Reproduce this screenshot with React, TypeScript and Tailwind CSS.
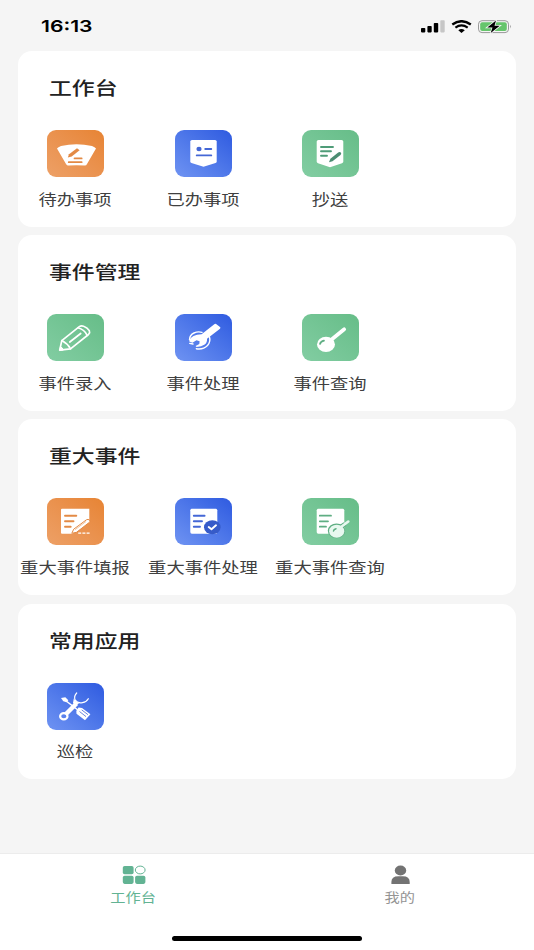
import type { ReactNode } from "react";
import clsx from "clsx";

type Tone = "orange" | "blue" | "green";

type AppItem = {
  label: string;
  tone: Tone;
  icon: ReactNode;
};

type Section = {
  title: string;
  items: AppItem[];
};

const tones: Record<Tone, string> = {
  orange: "bg-linear-to-tr from-[#eda066] to-[#e78433] text-[#e38a45]",
  blue: "bg-linear-to-tr from-[#6f93f2] to-[#2f5ae0] text-[#4467d6]",
  green: "bg-linear-to-tr from-[#82cda2] to-[#66bd88] text-[#5fae83]",
};

/* Tile icons, all drawn on the 57x47 tile. currentColor is the tile's tint. */

const TodoIcon = (
  <>
    <path d="M10 18.5Q11 17 14 16Q29.500 12.300 45 16Q48 17 49 18.500L40 34Q39.300 35.700 37.500 35.500Q29.500 34.800 21.500 35.500Q20 35.700 19 34Z" fill="#fff" />
    <path d="M20.800 27.600L22 24.300L30 18.300L32.600 20.200L24.700 26.600Z" fill="currentColor" />
    <path d="M27.500 28.400H34.700M21.700 32.200H34.700" stroke="currentColor" strokeWidth="1.700" strokeLinecap="round" />
  </>
);

const DoneIcon = (
  <>
    <path d="M17 10H40Q41.700 10 41.700 11.500V31.500Q41.700 32.600 40.500 33L28.500 36.800L16.500 33Q15.300 32.600 15.300 31.500V11.500Q15.300 10 17 10Z" fill="#fff" />
    <ellipse cx="24" cy="19" rx="2.600" ry="2.200" fill="currentColor" />
    <path d="M30.200 19H36.300M21.700 25.400H36.300" stroke="currentColor" strokeWidth="1.800" strokeLinecap="round" />
  </>
);

const CopyIcon = (
  <>
    <path d="M16.500 10H39.500Q41.300 10 41.300 11.500V31.800Q41.300 32.800 40 33.200L28 37.200L16 33.200Q14.700 32.800 14.700 31.800V11.500Q14.700 10 16.500 10Z" fill="#fff" />
    <path d="M19 17H31M19 21.300H29M19 25.700H25" stroke="#4f9c78" strokeWidth="1.900" strokeLinecap="round" />
    <path d="M27 32.200L28.400 28.800L36.200 22.400Q38 21.500 39 22.800Q39.600 23.800 38.500 24.900L30.500 31.200Z" fill="#4b8d72" />
  </>
);

const PencilIcon = (
  <g fill="none" stroke="#fff" strokeWidth="1.700" strokeLinejoin="round" strokeLinecap="round">
    <path d="M12.700 36.200L14.800 26.600L32.300 12.600Q34.300 11.200 36.600 12.200Q40.500 13.600 42.300 16.600Q43.300 18.700 41.500 20.500L23.500 34.800Z" />
    <path d="M14.800 26.600Q20.500 29.500 23.500 34.800M30.800 13.800Q37.500 15.500 40.200 21.400M22.800 28L33.700 19.500" />
    <path d="M12.700 36.200L13.500 32.800Q15.500 33.500 16.200 35.700Z" fill="#fff" strokeWidth="1" />
  </g>
);

const WrenchIcon = (
  <>
    {/* Broken ring round the jaw */}
    <path d="M14.500 25.800Q14.600 21 19 19Q23 17.200 27 18.400M34.400 22.800Q36 27.500 32.500 31.500Q28.300 35.800 21.300 34.700" fill="none" stroke="#fff" strokeWidth="1.400" strokeLinecap="round" />
    <path d="M39.300 10.200Q40.200 9.400 41.100 10.100L45 13.100Q45.900 13.900 45 14.700L32 24.800Q32.400 28.500 29.700 30.600Q26.500 33 21.500 33L20.600 32L24.300 29.900L24.600 27.300L21.500 26.200L17.400 28.700L14.300 27.600Q14.500 24 18.500 21.900Q21.500 20.400 26.600 20.300Z" fill="#fff" />
    <path d="M14.700 29.300L18 30" stroke="#fff" strokeWidth="1.300" strokeLinecap="round" />
  </>
);

const SearchIcon = (
  <>
    <path d="M29 26L42.200 15.300" stroke="#fff" strokeWidth="3.700" strokeLinecap="round" />
    <ellipse cx="24" cy="30.400" rx="9" ry="7.600" fill="#fff" />
    <path d="M18 30Q18.600 27.400 22 26.600" fill="none" stroke="currentColor" strokeWidth="1.700" strokeLinecap="round" />
  </>
);

const ReportIcon = (
  <>
    <path d="M15 10.700H42.300V22.500L25.500 35.700H15Q14 35.700 14 34.700V11.700Q14 10.700 15 10.700Z" fill="#fff" />
    <path d="M18 17.700H29.300M18 23.300H26.500M18 28.700H23.700" stroke="currentColor" strokeWidth="1.900" strokeLinecap="round" />
    <path d="M24.800 35.300L26.700 31.200L39.400 21.800Q41 20.900 42.500 22Q43.700 23.200 42.400 24.300L29.500 34.300Z" fill="#fff" stroke="currentColor" strokeWidth="1" />
    <path d="M28 31.700L39 23.500" stroke="currentColor" strokeWidth=".5" />
    <path d="M31.200 35.200H43" stroke="#fff" strokeWidth="1.300" strokeDasharray="3 1.200" />
  </>
);

const ProcessIcon = (
  <>
    <rect x="15.300" y="10.700" width="27" height="25" rx="1.600" fill="#fff" />
    <path d="M18.800 17.700H29.600M18.800 23.300H27M18.800 28.700H25" stroke="currentColor" strokeWidth="1.900" strokeLinecap="round" />
    <ellipse cx="37.300" cy="29.200" rx="8.300" ry="7" fill="#365bc9" />
    <path d="M33.700 29L36.500 31.300L41 27.300" fill="none" stroke="#fff" strokeWidth="1.900" strokeLinecap="round" strokeLinejoin="round" />
  </>
);

const LookupIcon = (
  <>
    <rect x="14.700" y="10.700" width="27.600" height="25" rx="1.600" fill="#fff" />
    <path d="M17.800 17.700H29M17.800 23.300H26M17.800 28.700H24" stroke="currentColor" strokeWidth="1.800" strokeLinecap="round" />
    <path d="M38 29.700L43 26" stroke="currentColor" strokeWidth="4.600" />
    <ellipse cx="34.500" cy="32.800" rx="8.700" ry="7.400" fill="currentColor" />
    <path d="M38 29.700L46.300 23.500" stroke="#e8f8ef" strokeWidth="2.600" strokeLinecap="round" />
    <ellipse cx="34.700" cy="33.200" rx="7.600" ry="6.500" fill="#e8f8ef" />
    <path d="M31.500 33Q31.700 31.400 34 30.800" fill="none" stroke="currentColor" strokeWidth="1.500" strokeLinecap="round" />
  </>
);

const InspectIcon = (
  <>
    <path d="M18.500 17.500L31.500 27.500" stroke="#fff" strokeWidth="1.500" />
    <path d="M14 15L18.300 14.300L21.300 17.200L19.700 19.300L16.300 18.300Z" fill="#fff" />
    <path d="M31.500 24.600L35 25L43.400 31.200L38 37.200L29.500 30.800L29.300 28Z" fill="#fff" />
    <path d="M32.500 28.500L39 33.600M34.700 26.900L41 31.700" stroke="currentColor" strokeWidth=".8" />
    <path d="M18.500 31.500L29.500 20.500" stroke="#fff" strokeWidth="4.500" />
    <ellipse cx="16.800" cy="33.300" rx="3.700" ry="3.100" fill="none" stroke="#fff" strokeWidth="2.200" />
    <path d="M29.700 10Q26.500 13.500 28.200 17.200Q30.500 20.500 35.500 19.600Q39.700 18.800 41.300 15.700" fill="none" stroke="#fff" strokeWidth="1.200" strokeLinecap="round" />
    <path d="M26.800 15.500L28.200 17.800L32 20.200L29 22.500L26 20Z" fill="#fff" />
  </>
);

const sections: Section[] = [
  {
    title: "工作台",
    items: [
      { label: "待办事项", tone: "orange", icon: TodoIcon },
      { label: "已办事项", tone: "blue", icon: DoneIcon },
      { label: "抄送", tone: "green", icon: CopyIcon },
    ],
  },
  {
    title: "事件管理",
    items: [
      { label: "事件录入", tone: "green", icon: PencilIcon },
      { label: "事件处理", tone: "blue", icon: WrenchIcon },
      { label: "事件查询", tone: "green", icon: SearchIcon },
    ],
  },
  {
    title: "重大事件",
    items: [
      { label: "重大事件填报", tone: "orange", icon: ReportIcon },
      { label: "重大事件处理", tone: "blue", icon: ProcessIcon },
      { label: "重大事件查询", tone: "green", icon: LookupIcon },
    ],
  },
  {
    title: "常用应用",
    items: [{ label: "巡检", tone: "blue", icon: InspectIcon }],
  },
];

function StatusBar() {
  return (
    <header className="flex h-[51px] shrink-0 items-center justify-between pt-[2px] pr-[22px] pl-[40px]">
      <span className="ml-[.5px] origin-left scale-x-[1.28] font-['Inter'] text-[16.5px] font-semibold text-black">
        16:13
      </span>
      <svg className="h-[14px] w-[92px]" viewBox="0 0 92 14" fill="none">
        {/* Signal */}
        <rect x="1" y="8" width="4.300" height="4.400" rx=".8" fill="#000" />
        <rect x="7.400" y="6" width="4.300" height="6.400" rx=".8" fill="#000" />
        <rect x="13.800" y="3" width="4.400" height="9.400" rx=".8" fill="#000" />
        <rect x="20.300" y=".3" width="4.400" height="12.100" rx=".8" fill="#c6c6c6" />
        {/* Wifi */}
        <path d="M32.300 4.400Q41.500 -2 50.800 4.400" stroke="#000" strokeWidth="2.400" />
        <path d="M35.400 7.600Q41.500 3.200 47.700 7.600" stroke="#000" strokeWidth="2.200" />
        <path d="M38.300 10.200Q41.500 7.800 44.800 10.200L41.500 12.900Z" fill="#000" />
        {/* Battery */}
        <rect x="58.500" y=".7" width="30" height="11.900" rx="3.500" stroke="#999" strokeWidth="1" />
        <rect x="60.200" y="2.200" width="26.600" height="8.900" rx="2" fill="#66c56c" />
        <path d="M90 4.800Q91.500 6.600 90 8.500Z" fill="#888" />
        <path d="M76 .6L67.300 7.400H72.500L70.700 13L79.700 5.800H74.500Z" fill="#000" stroke="#f5f5f5" strokeWidth="1.600" paintOrder="stroke" />
      </svg>
    </header>
  );
}

function AppTile({ label, tone, icon }: AppItem) {
  return (
    <div className="flex w-[127.7px] flex-col items-center">
      <div className={clsx("h-[47px] w-[57px] overflow-hidden rounded-[9px]", tones[tone])}>
        <svg className="h-full w-full" viewBox="0 0 57 47" fill="none">
          {icon}
        </svg>
      </div>
      <span className="mt-[10.5px] mr-px scale-x-[1.22] text-[15px] leading-[22px] whitespace-nowrap text-[#404040]">
        {label}
      </span>
    </div>
  );
}

function SectionCard({ title, items }: Section) {
  return (
    <section className="h-[175.800px] rounded-[14px] bg-white pt-[21px]">
      <h2 className="ml-[31px] w-fit origin-left scale-x-[1.235] text-[18.5px] leading-[30px] font-medium text-[#222]">
        {title}
      </h2>
      <div className="mt-[28px] -ml-[6.500px] flex">
        {items.map((item) => (
          <AppTile key={item.label} {...item} />
        ))}
      </div>
    </section>
  );
}

function TabBar() {
  return (
    <footer className="h-[97px] shrink-0 border-t border-[#ececec] bg-white">
      <nav className="flex h-[82px] pt-[11px]">
        <div className="flex flex-1 flex-col items-center text-[#62b393]">
          <svg className="h-5 w-6" viewBox="0 0 24 20" fill="none">
            <rect x=".800" y="1" width="10.800" height="8.200" rx="1.800" fill="currentColor" />
            <ellipse cx="18.200" cy="5" rx="4.900" ry="3.900" stroke="currentColor" strokeWidth="1" />
            <rect x=".800" y="10.700" width="10.800" height="8.200" rx="1.800" fill="currentColor" />
            <rect x="13.100" y="10.700" width="10.300" height="8.200" rx="1.800" fill="currentColor" />
          </svg>
          <span className="mt-[2px] scale-x-[1.2] text-[12.700px] leading-5">工作台</span>
        </div>
        <div className="flex flex-1 flex-col items-center text-[#737373]">
          <svg className="h-5 w-6" viewBox="0 0 24 20" fill="currentColor">
            <ellipse cx="11.500" cy="5.500" rx="5.700" ry="4.900" />
            <path d="M2.400 19V17Q2.400 11.300 9.300 11.300H13.800Q20.700 11.300 20.700 17V19Z" />
          </svg>
          <span className="mt-[2px] mr-px scale-x-[1.2] text-[12.700px] leading-5 text-[#949494]">我的</span>
        </div>
      </nav>
      <div className="mx-auto h-[5px] w-[190px] rounded-full bg-black" />
    </footer>
  );
}

export default function App() {
  return (
    <div className="flex h-[950px] w-[534px] flex-col overflow-hidden bg-[#f5f5f5] font-['Noto_Sans_CJK_SC',sans-serif]">
      <StatusBar />
      <main className="flex flex-1 flex-col gap-[8.400px] px-[18px]">
        {sections.map((section) => (
          <SectionCard key={section.title} {...section} />
        ))}
      </main>
      <TabBar />
    </div>
  );
}
